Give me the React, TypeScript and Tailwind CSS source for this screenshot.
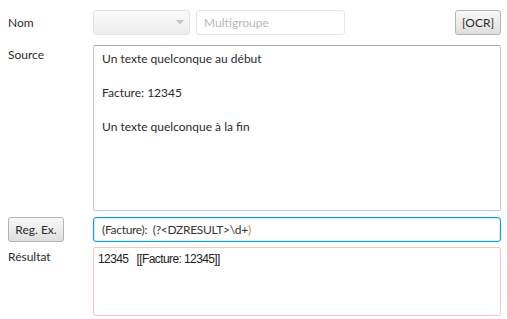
import React from "react";

const font = { fontFamily: "Lato, 'Open Sans', sans-serif" };

function ComboArrow() {
  return (
    <svg width="8" height="5" viewBox="0 0 8 5" className="shrink-0">
      <path d="M0 0 L8 0 L4 4.5 Z" fill="#c4c4c4" />
    </svg>
  );
}

export default function App() {
  return (
    <div
      className="w-[507px] h-[319px] bg-white text-[12px] text-[#2b2b2b] pl-2 pr-[6px] pt-[10px] grid grid-cols-[85px_1fr] content-start"
      style={font}
    >
      {/* Nom row */}
      <div className="h-[25px] flex items-center">Nom</div>
      <div className="h-[25px] flex items-center">
        <div className="w-[97px] h-[25px] rounded-[3px] border border-[#e3e3e3] bg-gradient-to-b from-[#fafafa] to-[#eeeeee] flex items-center justify-end pr-[5px]">
          <ComboArrow />
        </div>
        <div className="ml-[6px] w-[149px] h-[25px] rounded-[3px] border border-[#e6e6e6] bg-white flex items-center pl-[7px] text-[#b8b8b8]">
          Multigroupe
        </div>
        <div className="flex-1" />
        <button className="w-[46px] h-[25px] rounded-[3px] border border-[#b4b4b4] bg-gradient-to-b from-[#f9f9f9] to-[#dedede] text-[#2b2b2b] text-[12px] flex items-center justify-center">
          [OCR]
        </button>
      </div>

      {/* Source row */}
      <div className="mt-[10px] h-[20px] flex items-center">Source</div>
      <div className="mt-[10px] h-[166px] border border-[#c6c6c6] border-t-[#aaaaaa] rounded-[2px] bg-white pl-[8px] pt-[4px] leading-[17px]">
        <div>Un texte quelconque au début</div>
        <div>&nbsp;</div>
        <div>Facture: 12345</div>
        <div>&nbsp;</div>
        <div>Un texte quelconque à la fin</div>
      </div>

      {/* Regex row */}
      <div className="mt-[6px] h-[25px] flex items-center">
        <button className="w-[56px] h-[25px] rounded-[3px] border border-[#b4b4b4] bg-gradient-to-b from-[#f9f9f9] to-[#dedede] text-[#2b2b2b] text-[12px] flex items-center justify-center">
          Reg. Ex.
        </button>
      </div>
      <div className="mt-[6px] h-[25px] rounded-[3px] border border-[#0a9fd8] shadow-[inset_0_0_0_1px_#d6eef9] bg-white flex items-center pl-[8px] text-[#3a3530] whitespace-pre tracking-[-0.3px]">
        {"(Facture):  (?<DZRESULT>\\d+"}
        <span className="text-[#d08a2a]">)</span>
      </div>

      {/* Résultat row */}
      <div className="mt-[5px] h-[20px] flex items-center">Résultat</div>
      <div
        className="mt-[5px] h-[69px] rounded-[2px] border border-[#f6c6c6] bg-white pl-[4px] pt-[3px] leading-[16px] whitespace-pre tracking-[-0.6px] text-[#222]"
        style={{ fontFamily: "'Liberation Sans', Arial, sans-serif" }}
      >
        {"12345   [[Facture: 12345]]"}
      </div>
    </div>
  );
}
